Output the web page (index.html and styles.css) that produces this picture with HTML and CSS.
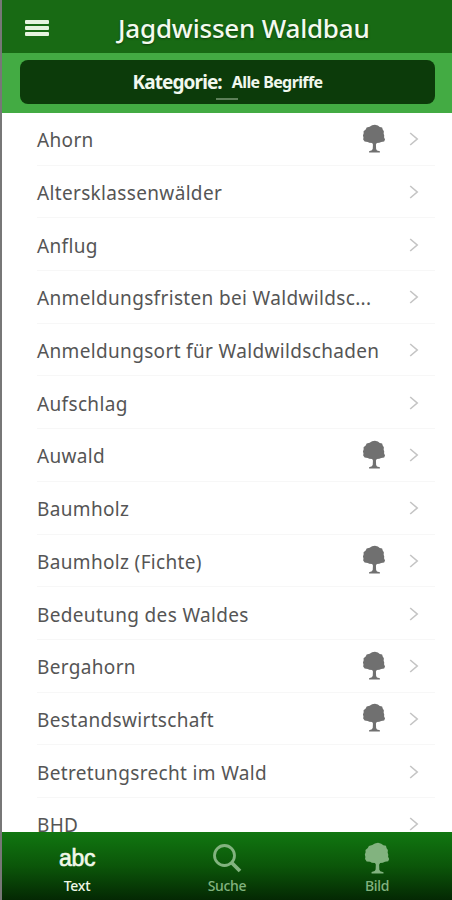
FILE: index.html
```html
<!DOCTYPE html>
<html lang="de">
<head>
  <meta charset="UTF-8">
  <meta name="viewport" content="width=device-width, initial-scale=1.0">
  <title>Jagdwissen Waldbau</title>
  <link rel="stylesheet" href="styles.css">
</head>
<body>
  <svg class="sprite" width="0" height="0">
    <symbol id="tree" viewBox="0 0 24 30">
      <path d="M7.5 2.8 10 1.4l3-.6 3 .8 2 1.4 2.4.6.6 2.2 1.2 1.6-.2 2.6.6 2-.2 1.8 1 2.2-.9 2-3 .6-2 .8-2.6.3-.9 1.6.2 4.6.9 1.5 3 .9V29.5H6.9v-1.4l2.9-.9.9-1.5.2-4.6-.8-1.4-3-.3-1.6-.8-3.2-.4L.8 16l.3-2-.5-2.2.7-2.2-.1-2.2 2.2-1.8 1-1.9z"/>
    </symbol>
    <symbol id="arrow" viewBox="0 0 10 16">
      <path d="M1.2 2 8.2 8l-7 6" fill="none" stroke="currentColor" stroke-width="1.6"/>
    </symbol>
  </svg>

  <div class="app">
    <header class="header">
      <button class="menu-btn" aria-label="Menü"><span></span><span></span><span></span></button>
      <h1>Jagdwissen Waldbau</h1>
    </header>

    <div class="filter">
      <div class="category"><strong>Kategorie:</strong><span>Alle Begriffe</span></div>
    </div>

    <ul class="list">
      <li><span class="term">Ahorn</span><svg class="tree"><use href="#tree"/></svg><svg class="arrow"><use href="#arrow"/></svg></li>
      <li><span class="term">Altersklassenwälder</span><svg class="arrow"><use href="#arrow"/></svg></li>
      <li><span class="term">Anflug</span><svg class="arrow"><use href="#arrow"/></svg></li>
      <li><span class="term">Anmeldungsfristen bei Waldwildsc...</span><svg class="arrow"><use href="#arrow"/></svg></li>
      <li><span class="term">Anmeldungsort für Waldwildschaden</span><svg class="arrow"><use href="#arrow"/></svg></li>
      <li><span class="term">Aufschlag</span><svg class="arrow"><use href="#arrow"/></svg></li>
      <li><span class="term">Auwald</span><svg class="tree"><use href="#tree"/></svg><svg class="arrow"><use href="#arrow"/></svg></li>
      <li><span class="term">Baumholz</span><svg class="arrow"><use href="#arrow"/></svg></li>
      <li><span class="term">Baumholz (Fichte)</span><svg class="tree"><use href="#tree"/></svg><svg class="arrow"><use href="#arrow"/></svg></li>
      <li><span class="term">Bedeutung des Waldes</span><svg class="arrow"><use href="#arrow"/></svg></li>
      <li><span class="term">Bergahorn</span><svg class="tree"><use href="#tree"/></svg><svg class="arrow"><use href="#arrow"/></svg></li>
      <li><span class="term">Bestandswirtschaft</span><svg class="tree"><use href="#tree"/></svg><svg class="arrow"><use href="#arrow"/></svg></li>
      <li><span class="term">Betretungsrecht im Wald</span><svg class="arrow"><use href="#arrow"/></svg></li>
      <li><span class="term">BHD</span><svg class="arrow"><use href="#arrow"/></svg></li>
    </ul>

    <nav class="tabs">
      <a class="tab active"><span class="tab-icon abc">abc</span><span>Text</span></a>
      <a class="tab">
        <svg class="tab-icon" viewBox="0 0 30 30"><circle cx="12.5" cy="12.5" r="10" fill="none" stroke="currentColor" stroke-width="2.8"/><path d="M19.5 19.5 28 28" stroke="currentColor" stroke-width="3.8"/></svg>
        <span>Suche</span>
      </a>
      <a class="tab"><svg class="tab-icon tab-tree"><use href="#tree"/></svg><span>Bild</span></a>
    </nav>
  </div>
</body>
</html>
```
FILE: styles.css
```css
* {
  box-sizing: border-box;
}

body {
  margin: 0;
  background: #fff;
  font-family: "Noto Sans", "Open Sans", sans-serif;
}

.sprite {
  display: block;
}

.app {
  display: flex;
  flex-direction: column;
  height: 900px;
  border-left: 2px solid #777;
  overflow: hidden;
}

.header {
  display: flex;
  align-items: center;
  flex: none;
  height: 53px;
  padding: 2px 0 0 23px;
  background: #186a14;
  color: #f4faef;
}

.menu-btn {
  display: flex;
  flex-direction: column;
  gap: 2px;
  width: 24px;
  padding: 0;
  border: none;
  background: none;
}

.menu-btn span {
  height: 4px;
  border-radius: 1px;
  background: #e6f4df;
}

h1 {
  margin: 0 0 0 69px;
  font-size: 26px;
  font-weight: 500;
  line-height: 36px;
  letter-spacing: -0.2px;
  white-space: nowrap;
  text-shadow: 0 1px 2px #0b3d09;
}

.filter {
  flex: none;
  height: 60px;
  padding: 7px 17px 9px 18px;
  background: #43ab43;
}

.category {
  display: flex;
  justify-content: center;
  align-items: center;
  gap: 10px;
  position: relative;
  height: 44px;
  border-radius: 8px;
  background: #0c3b0a;
  color: #f1f8ee;
  font-size: 16px;
  font-weight: 700;
  letter-spacing: -0.6px;
  white-space: nowrap;
}

.category strong {
  font-size: 19px;
  font-weight: 700;
  letter-spacing: -0.9px;
}

.category::after {
  content: "";
  position: absolute;
  left: 196px;
  bottom: 4px;
  width: 22px;
  height: 2px;
  background: #5d8059;
}

.list {
  flex: 1;
  min-height: 0;
  margin: 0;
  padding: 0 17px 0 35px;
  list-style: none;
  overflow: hidden;
}

.list li {
  display: flex;
  align-items: center;
  height: 52.7px;
  padding: 3px 16px 0 0;
  border-bottom: 1px solid #f7f7f7;
}

.term {
  flex: 1;
  color: #555;
  font-size: 19px;
  letter-spacing: 0.34px;
  white-space: nowrap;
}

.tree {
  width: 24px;
  height: 29px;
  margin: -4px 23px 0 0;
  fill: #707070;
}

.arrow {
  width: 10px;
  height: 16px;
  margin-top: -2px;
  color: #c4c4c4;
}

.tabs {
  display: flex;
  flex: none;
  height: 68px;
  background: linear-gradient(#117711, #0b5609 50%, #042803);
}

.tab {
  display: flex;
  flex-direction: column;
  align-items: center;
  flex: 1;
  padding-top: 10px;
  color: #82b37f;
  font-size: 14px;
  font-weight: 500;
  line-height: 20px;
  letter-spacing: -0.3px;
}

.tab.active {
  color: #f1f8e9;
}

.tab-icon {
  width: 30px;
  height: 32px;
  margin-bottom: 2px;
}

.tab-tree {
  fill: currentColor;
}

.abc {
  width: auto;
  font-family: "Liberation Sans", Arial, sans-serif;
  font-size: 23px;
  line-height: 32px;
  -webkit-text-stroke: 0.6px currentColor;
}
```
